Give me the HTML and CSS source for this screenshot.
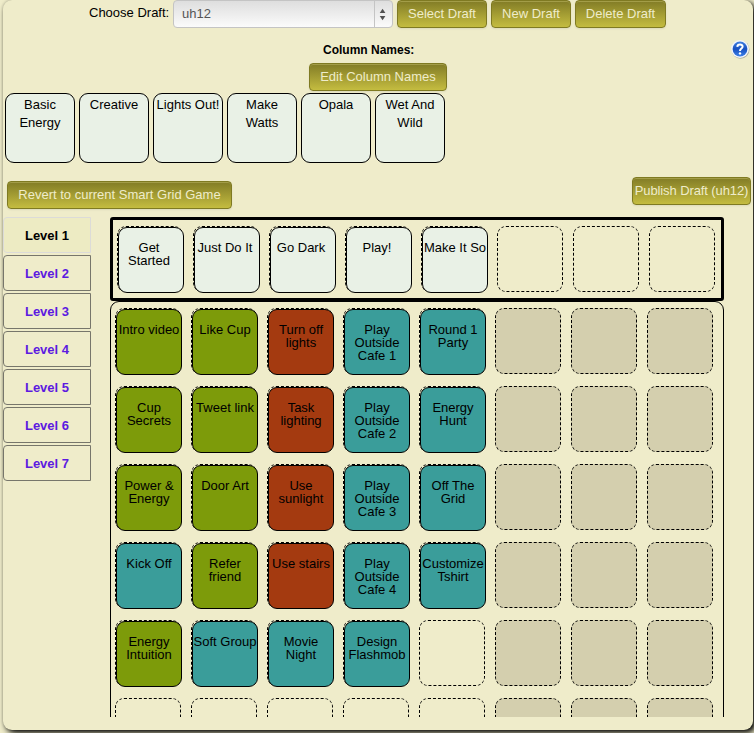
FILE: index.html
```
<!DOCTYPE html>
<html lang="en">
<head>
<meta charset="utf-8">
<title>Smart Grid Game Designer</title>
<link rel="stylesheet" href="styles.css">
</head>
<body>
<main class="panel">
  <div class="toolbar">
    <label class="toolbar-label">Choose Draft:</label>
    <div class="select"><span>uh12</span>
      <svg class="arrows" width="18" height="26" viewBox="0 0 18 26"><path d="M5 12 8 7.500l3 4.500zM5 15 8 19.500l3-4.500z" fill="#505050"/></svg>
    </div>
    <button class="btn w-select">Select Draft</button>
    <button class="btn w-new">New Draft</button>
    <button class="btn w-delete">Delete Draft</button>
  </div>

  <section class="columns">
    <h2>Column Names:</h2>
    <svg class="help" width="20" height="20" viewBox="0 0 20 20">
      <defs><linearGradient id="blue" x1="0" y1="0" x2="0" y2="1"><stop offset="0" stop-color="#3f7fe0"/><stop offset=".5" stop-color="#1850c0"/><stop offset="1" stop-color="#3c80e8"/></linearGradient></defs>
      <circle cx="10.500" cy="10.700" r="9" fill="#8f9188" opacity=".7"/>
      <circle cx="10" cy="10" r="9" fill="#f0f3fa"/>
      <circle cx="10" cy="10" r="7.400" fill="url(#blue)"/>
      <path d="M7.300 7.900C7.500 4.700 12.800 4.800 12.600 7.800C12.500 9.600 10 9.700 10 12" fill="none" stroke="#fff" stroke-width="2"/>
      <circle cx="10" cy="14.400" r="1.200" fill="#fff"/>
    </svg>
    <button class="btn w-edit">Edit Column Names</button>
    <div class="names">
      <div class="name">Basic<br>Energy</div>
      <div class="name">Creative</div>
      <div class="name">Lights Out!</div>
      <div class="name">Make<br>Watts</div>
      <div class="name">Opala</div>
      <div class="name">Wet And<br>Wild</div>
    </div>
  </section>

  <div class="actions">
    <button class="btn w-revert">Revert to current Smart Grid Game</button>
    <button class="btn w-publish">Publish Draft (uh12)</button>
  </div>

  <div class="designer">
    <nav class="levels">
      <a class="level active">Level 1</a>
      <a class="level">Level 2</a>
      <a class="level">Level 3</a>
      <a class="level">Level 4</a>
      <a class="level">Level 5</a>
      <a class="level">Level 6</a>
      <a class="level">Level 7</a>
    </nav>
    <div class="board">
      <div class="head">
        <div class="slot"><div class="tile pale">Get<br>Started</div></div>
        <div class="slot"><div class="tile pale">Just Do It</div></div>
        <div class="slot"><div class="tile pale">Go Dark</div></div>
        <div class="slot"><div class="tile pale">Play!</div></div>
        <div class="slot"><div class="tile pale full">Make It So</div></div>
        <div class="slot"></div>
        <div class="slot"></div>
        <div class="slot"></div>
      </div>
      <div class="grid">
        <div class="slot"><div class="tile green">Intro video</div></div>
        <div class="slot"><div class="tile green">Like Cup</div></div>
        <div class="slot"><div class="tile red">Turn off<br>lights</div></div>
        <div class="slot"><div class="tile teal">Play<br>Outside<br>Cafe 1</div></div>
        <div class="slot"><div class="tile teal">Round 1<br>Party</div></div>
        <div class="slot off"></div><div class="slot off"></div><div class="slot off"></div>

        <div class="slot"><div class="tile green">Cup<br>Secrets</div></div>
        <div class="slot"><div class="tile green">Tweet link</div></div>
        <div class="slot"><div class="tile red">Task<br>lighting</div></div>
        <div class="slot"><div class="tile teal">Play<br>Outside<br>Cafe 2</div></div>
        <div class="slot"><div class="tile teal">Energy<br>Hunt</div></div>
        <div class="slot off"></div><div class="slot off"></div><div class="slot off"></div>

        <div class="slot"><div class="tile green">Power &amp;<br>Energy</div></div>
        <div class="slot"><div class="tile green">Door Art</div></div>
        <div class="slot"><div class="tile red">Use<br>sunlight</div></div>
        <div class="slot"><div class="tile teal">Play<br>Outside<br>Cafe 3</div></div>
        <div class="slot"><div class="tile teal">Off The<br>Grid</div></div>
        <div class="slot off"></div><div class="slot off"></div><div class="slot off"></div>

        <div class="slot"><div class="tile teal">Kick Off</div></div>
        <div class="slot"><div class="tile green">Refer<br>friend</div></div>
        <div class="slot"><div class="tile red">Use stairs</div></div>
        <div class="slot"><div class="tile teal">Play<br>Outside<br>Cafe 4</div></div>
        <div class="slot"><div class="tile teal">Customize<br>Tshirt</div></div>
        <div class="slot off"></div><div class="slot off"></div><div class="slot off"></div>

        <div class="slot"><div class="tile green">Energy<br>Intuition</div></div>
        <div class="slot"><div class="tile teal">Soft Group</div></div>
        <div class="slot"><div class="tile teal">Movie<br>Night</div></div>
        <div class="slot"><div class="tile teal">Design<br>Flashmob</div></div>
        <div class="slot"></div>
        <div class="slot off"></div><div class="slot off"></div><div class="slot off"></div>

        <div class="slot"></div><div class="slot"></div><div class="slot"></div><div class="slot"></div><div class="slot"></div>
        <div class="slot off"></div><div class="slot off"></div><div class="slot off"></div>
      </div>
    </div>
  </div>
</main>
</body>
</html>
```
FILE: styles.css
```
* { box-sizing: border-box; }
html, body { height: 100%; }
body {
  margin: 0;
  overflow: hidden;
  background: #efecca;
  color: #000;
  font: 13px/18px "Liberation Sans", Arial, sans-serif;
}
.panel {
  width: 750px;
  height: 730px;
  margin-left: 3px;
  border-radius: 9px;
  background: #efecca;
  box-shadow: 3px 3px 6px #000, 0 0 3px rgba(0, 0, 0, .2);
  overflow: hidden;
}
.toolbar { display: flex; gap: 4px; height: 28px; padding-left: 86px; }
.toolbar-label { width: 80px; line-height: 26px; white-space: nowrap; }
.select {
  display: flex;
  justify-content: space-between;
  width: 220px;
  height: 28px;
  padding-left: 8px;
  border: 1px solid #c4c4c4;
  border-radius: 4px;
  background: linear-gradient(#dedede, #fbfbfb);
  color: #555;
  line-height: 26px;
}
.arrows { border-left: 1px solid #c4c4c4; }
.btn {
  height: 28px;
  padding: 0 0 1px;
  border: 1px solid #7f7a22;
  border-radius: 4px;
  background: linear-gradient(#827c26, #c4bc40);
  box-shadow: inset 0 1px 0 #a39d48, 0 1px 2px rgba(0, 0, 0, .08);
  color: #efecca;
  font: 13px/24px "Liberation Sans", Arial, sans-serif;
  white-space: nowrap;
}
.w-select { width: 90px; }
.w-new { width: 80px; }
.w-delete { width: 91px; }
.w-edit { display: block; width: 138px; margin-left: 306px; }
.w-revert { width: 225px; margin-top: 4px; }
.w-publish { width: 119px; letter-spacing: -.1px; }
.columns { position: relative; padding-top: 13px; }
.columns h2 { margin: 0 0 4px 320px; font-size: 12px; line-height: 18px; white-space: nowrap; }
.help { position: absolute; top: 11px; right: 3px; }
.names { display: flex; gap: 4px; padding: 2px 0 0 2px; }
.name {
  width: 70px;
  height: 70px;
  padding-top: 2px;
  border: 1px solid #000;
  border-radius: 9px;
  background: #e9f1e6;
  text-align: center;
  white-space: nowrap;
}
.actions { display: flex; justify-content: space-between; height: 40px; margin-top: 14px; padding: 0 2px 0 4px; }
.designer { display: flex; gap: 19px; }
.levels { display: flex; flex-direction: column; gap: 2px; width: 88px; }
.level {
  height: 36px;
  border: 1px solid #77766b;
  border-radius: 4px 0 0 4px;
  color: #5c1ae0;
  font-weight: bold;
  line-height: 35px;
  text-align: center;
}
.level.active { border-color: #dcdbd8; background: #edebc3; color: #000; }
.board { width: 614px; height: 500px; overflow: hidden; }
.head {
  display: flex;
  gap: 10px;
  width: 614px;
  height: 84px;
  padding: 6px 0 0 4px;
  border: 3px solid #000;
  border-radius: 3px;
}
.grid {
  display: grid;
  grid-template-columns: repeat(8, 66px);
  grid-auto-rows: 66px;
  gap: 12px 10px;
  height: 500px;
  padding: 6px 0 0 4px;
  border: 1px solid #000;
  border-radius: 9px;
}
.slot { width: 66px; height: 66px; border: 1px dashed #000; border-radius: 9px; }
.slot.off { background: #d4cfae; }
.tile {
  width: 66px;
  height: 66px;
  padding-top: 13px;
  border: 1px solid #000;
  border-radius: 9px;
  line-height: 13px;
  text-align: center;
  white-space: nowrap;
}
.head .tile { padding-right: 4px; }
.head .tile.full { padding-right: 0; }
.pale { background: #e9f1e6; }
.green { background: #7d9b0a; }
.red { background: #a43a10; }
.teal { background: #3a9d9a; }
```
